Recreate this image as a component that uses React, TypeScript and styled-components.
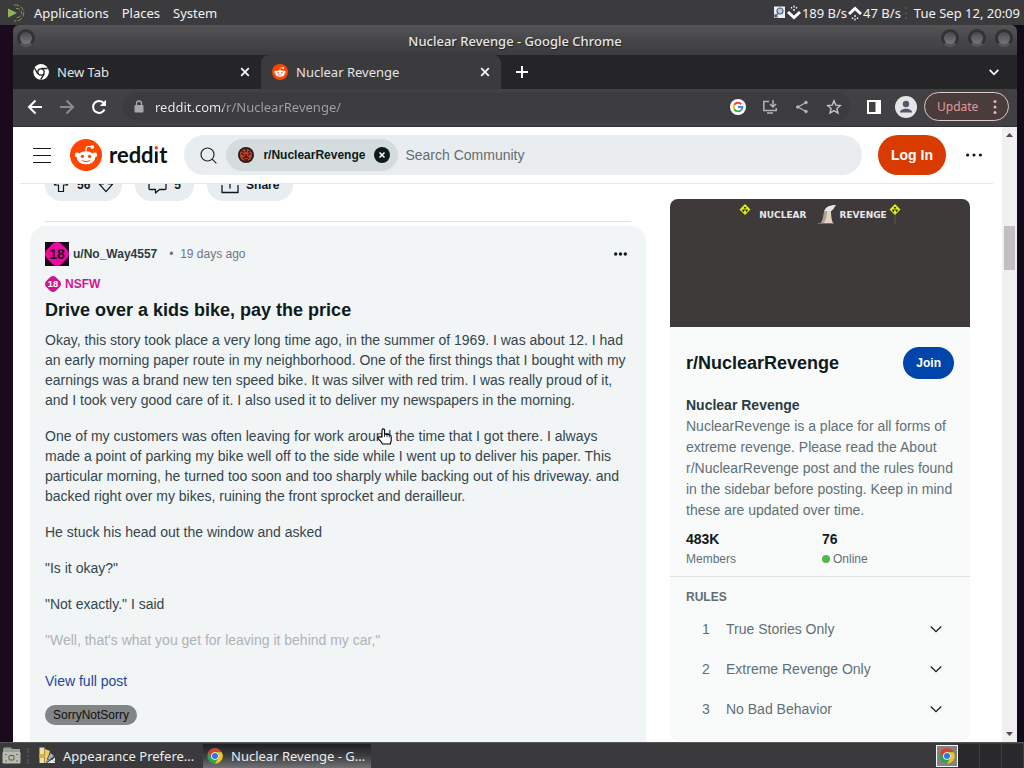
import React from "react";
import styled, { createGlobalStyle } from "styled-components";

const uiFont = '"Noto Sans", sans-serif';
const webFont = '"Liberation Sans", Arial, sans-serif';

const GlobalStyle = createGlobalStyle`
  *, *::before, *::after { box-sizing: border-box; }
  body { margin: 0; background: #1b0b1f; font-family: ${uiFont}; }
  button, input { font: inherit; color: inherit; }
  button { border: 0; padding: 0; background: none; cursor: pointer; }
  input { border: 0; padding: 0; outline: 0; background: none; }
  p, h1, h2, h3, ol, dl, dd { margin: 0; padding: 0; }
  ol { list-style: none; }
  svg { display: block; flex: none; }
`;

/* ---------- desktop ---------- */

const Desktop = styled.div`
  display: flex;
  flex-direction: column;
  height: 100vh;
  overflow: hidden;
  background: linear-gradient(90deg, #1b0a1e, #120c1a);
`;

const Panel = styled.header`
  display: flex;
  align-items: center;
  justify-content: space-between;
  flex: none;
  height: 25px;
  padding: 0 4px 0 8px;
  background: #3b3b3d;
  color: #f2f2f2;
  font-size: 13px;
  line-height: 24px;
`;

const PanelGroup = styled.div<{ $gap?: number }>`
  display: flex;
  align-items: center;
  gap: ${(p) => p.$gap ?? 0}px;
  white-space: nowrap;
`;

const PanelMenu = styled.button`
  margin-left: 8px;
  margin-right: 5px;
  line-height: 24px;
`;

const Clock = styled.time`
  margin-left: 4px;
`;

const Window = styled.section`
  display: flex;
  flex-direction: column;
  flex: 1;
  min-height: 0;
  margin: 0 7px 0 13px;
`;

const TitleBar = styled.div`
  display: grid;
  grid-template-columns: 1fr auto 1fr;
  align-items: center;
  flex: none;
  height: 30px;
  padding: 0 4px;
  border-radius: 6px 6px 0 0;
  background: linear-gradient(#555557, #48484a 45%, #3c3c3e);
`;

const WindowTitle = styled.h1`
  padding-top: 2px;
  color: #e6e6e6;
  font-size: 13px;
  font-weight: 500;
  line-height: 28px;
  text-shadow: 1px 1px 1px #222;
`;

const Orbs = styled.div<{ $end?: boolean }>`
  display: flex;
  gap: 9px;
  padding-bottom: 4px;
  justify-content: ${(p) => (p.$end ? "flex-end" : "flex-start")};
`;

const Orb = styled.button`
  width: 18px;
  height: 18px;
  border: 3px solid #333335;
  border-bottom-color: #565658;
  border-radius: 50%;
  background: linear-gradient(#4a4a4c, #777779);
`;

const TabStrip = styled.div`
  display: flex;
  flex: none;
  height: 34px;
  background: #252527;
  color: #e4e4e6;
  font-size: 13px;
`;

const Tab = styled.div<{ $active?: boolean }>`
  display: flex;
  align-items: center;
  flex: 0 1 ${(p) => (p.$active ? 240 : 248)}px;
  padding: 0 8px 0 ${(p) => (p.$active ? 11 : 20)}px;
  border-radius: 8px 8px 0 0;
  background: ${(p) => (p.$active ? "#3b3b3d" : "transparent")};
`;

const TabLabel = styled.button`
  display: flex;
  align-items: center;
  gap: 8px;
  flex: 1;
  min-width: 0;
  white-space: nowrap;
`;

const SquareButton = styled.button<{ $width?: number }>`
  display: flex;
  align-items: center;
  justify-content: center;
  flex: none;
  align-self: center;
  width: ${(p) => p.$width ?? 32}px;
  height: 28px;
`;

const StripSpacer = styled.div`
  flex: 1;
`;

const Toolbar = styled.div`
  display: flex;
  align-items: center;
  flex: none;
  height: 38px;
  padding: 0 8px 2px 6px;
  border-bottom: 1px solid #303032;
  background: #414143;
`;

const Omnibox = styled.label`
  display: flex;
  align-items: center;
  flex: 1;
  min-width: 0;
  height: 28px;
  margin: 0 8px;
  border-radius: 14px;
  background: #3c3c3e;
`;

const Slot = styled.span`
  display: flex;
  align-items: center;
  justify-content: center;
  flex: none;
  width: 32px;
`;

const UrlInput = styled.input`
  flex: 1;
  min-width: 0;
  height: 28px;
  font-size: 13px;
  color: transparent;
  background: linear-gradient(90deg, #eeeeee 68px, #a2a2a4 68px);
  -webkit-background-clip: text;
  background-clip: text;
`;

const UpdateButton = styled.button`
  display: flex;
  align-items: center;
  justify-content: space-between;
  width: 85px;
  height: 29px;
  margin-left: 2px;
  padding: 0 11px 0 12px;
  border: 1px solid #d9c9c8;
  border-radius: 15px;
  background: #4a3b3c;
  color: #e29a96;
  font-size: 12px;
`;

/* ---------- web page ---------- */

const Viewport = styled.div`
  display: flex;
  flex: 1;
  min-height: 0;
  background: #ffffff;
  font-family: ${webFont};
`;

const Page = styled.div`
  display: flex;
  flex-direction: column;
  flex: 1;
  min-width: 0;
  overflow: hidden;
`;

const SiteHeader = styled.header`
  position: relative;
  z-index: 1;
  display: flex;
  align-items: center;
  flex: none;
  height: 57px;
  margin: 0 9px 0 7px;
  padding-left: 13px;
  border-bottom: 1px solid #e4e7e9;
  background: #ffffff;
`;

const BrandLink = styled.a`
  display: flex;
  align-items: center;
  gap: 7px;
  margin-left: 19px;
  color: #111111;
  font-family: Lato, sans-serif;
  font-size: 22px;
  font-weight: 700;
  line-height: 32px;
  text-decoration: none;
`;

const DottedI = styled.span`
  background: linear-gradient(#ff4500 11px, #111111 11px);
  -webkit-background-clip: text;
  background-clip: text;
  color: transparent;
`;

const SearchBar = styled.div`
  display: flex;
  align-items: center;
  flex: 1;
  min-width: 0;
  height: 40px;
  margin: 0 16px 0 17px;
  padding-left: 16px;
  border-radius: 20px;
  background: #eaedef;
`;

const SearchChip = styled.span`
  display: flex;
  align-items: center;
  gap: 9px;
  height: 32px;
  margin: 0 7px 0 9px;
  padding: 0 8px 0 12px;
  border-radius: 16px;
  background: #d5dcde;
  color: #0f1a1c;
  font-size: 12px;
  font-weight: 700;
  white-space: nowrap;
`;

const SearchInput = styled.input`
  flex: 1;
  min-width: 0;
  height: 40px;
  font-size: 14px;
  color: #5c6c74;
  &::placeholder { color: #5f6d73; opacity: 1; }
`;

const PillButton = styled.button<{ $tone: "login" | "join" }>`
  flex: none;
  height: ${(p) => (p.$tone === "login" ? 40 : 32)}px;
  margin-right: ${(p) => (p.$tone === "login" ? 9 : 0)}px;
  padding: 0 13px;
  border-radius: 20px;
  background: ${(p) => (p.$tone === "login" ? "#d93a00" : "#0045ac")};
  color: #ffffff;
  font-size: ${(p) => (p.$tone === "login" ? 14 : 12)}px;
  font-weight: 700;
`;

const Columns = styled.main`
  display: flex;
  align-items: flex-start;
  gap: 24px;
  flex: 1;
  min-height: 0;
  padding: 0 32px 0 17px;
`;

const Feed = styled.div`
  flex: 1;
  min-width: 0;
  margin-top: -15px;
`;

const ActionRow = styled.div`
  display: flex;
  gap: 13px;
  margin: 0 15px;
  padding-bottom: 20px;
  border-bottom: 1px solid #dde1e3;
`;

const ActionPill = styled.div<{ $pad: number }>`
  display: flex;
  align-items: center;
  gap: 8px;
  height: 32px;
  padding: 0 ${(p) => p.$pad}px;
  border-radius: 16px;
  background: #eaedef;
  color: #0f1a1c;
  font-size: 12px;
  font-weight: 700;
`;

const ActionButton = styled.button`
  display: flex;
  align-items: center;
  gap: 7px;
`;

const Post = styled.article`
  margin-top: 4px;
  padding: 16px 15px 60px;
  border-radius: 16px;
  background: #f2f5f6;
`;

const PostMeta = styled.div`
  display: flex;
  align-items: center;
  height: 24px;
  color: #6b777c;
  font-size: 12px;
`;

const Author = styled.a`
  margin: 0 12px 0 4px;
  color: #2a3c42;
  font-weight: 700;
  text-decoration: none;
`;

const PostMenu = styled.button`
  margin-left: auto;
  padding: 4px;
`;

const Nsfw = styled.div`
  display: flex;
  align-items: center;
  gap: 4px;
  height: 16px;
  margin-top: 10px;
  color: #d6138f;
  font-size: 12px;
  font-weight: 700;
`;

const PostTitle = styled.h2`
  margin: 6px 0 8px;
  color: #0f1a1c;
  font-size: 18px;
  line-height: 24px;
`;

const PostText = styled.div`
  display: flex;
  flex-direction: column;
  gap: 16px;
  color: #33464c;
  font-size: 14px;
  line-height: 20px;
`;

const FadedParagraph = styled.p`
  color: #adb3b6;
`;

const MoreLink = styled.a`
  display: block;
  margin-top: 21px;
  color: #1f459b;
  font-size: 14px;
  line-height: 20px;
  text-decoration: none;
`;

const Flair = styled.a`
  display: inline-block;
  margin-top: 14px;
  padding: 0 8px;
  border-radius: 10px;
  background: #828586;
  color: #101010;
  font-size: 12px;
  line-height: 20px;
  text-decoration: none;
`;

const Sidebar = styled.aside`
  flex: none;
  width: 300px;
  min-height: 540px;
  margin-top: 15px;
  border-radius: 8px;
  background: #f9fbfb;
  color: #5f6f75;
  font-size: 14px;
  overflow: hidden;
`;

const Banner = styled.div`
  display: flex;
  align-items: flex-start;
  justify-content: center;
  height: 128px;
  padding: 4px 0 0;
  background: #3e3a39;
  color: #e8e8e8;
  font-family: "DejaVu Sans", sans-serif;
  font-size: 9px;
  font-weight: 700;
  line-height: 24px;
`;

const BannerWord = styled.span<{ $left: number; $right: number }>`
  margin: 0 ${(p) => p.$right}px 0 ${(p) => p.$left}px;
`;

const About = styled.section`
  padding: 20px 16px 7px;
  border-bottom: 1px solid #dde1e3;
`;

const AboutHead = styled.div`
  display: flex;
  align-items: center;
  justify-content: space-between;
  margin-bottom: 16px;
`;

const CommunityName = styled.h2`
  color: #0f1a1c;
  font-size: 18px;
  line-height: 24px;
`;

const AboutTitle = styled.h3`
  color: #2a3c42;
  font-size: 14px;
  line-height: 21px;
`;

const AboutText = styled.p`
  line-height: 21px;
`;

const Stats = styled.dl`
  display: grid;
  grid-template-columns: 1fr 1fr;
  column-gap: 4px;
  margin-top: 8px;
`;

const Stat = styled.div`
  display: flex;
  flex-direction: column-reverse;
  line-height: 20px;
`;

const StatLabel = styled.dt`
  display: flex;
  align-items: center;
  gap: 3px;
  font-size: 12px;
`;

const StatValue = styled.dd`
  color: #0f1a1c;
  font-weight: 700;
`;

const OnlineDot = styled.span`
  width: 8px;
  height: 8px;
  border-radius: 50%;
  background: #55b649;
`;

const Rules = styled.section`
  padding: 12px 16px;
`;

const RulesTitle = styled.h3`
  margin-bottom: 4px;
  font-size: 12px;
  line-height: 16px;
`;

const RuleButton = styled.button`
  display: grid;
  grid-template-columns: 24px 1fr auto;
  align-items: center;
  width: 100%;
  height: 40px;
  padding: 0 12px 0 16px;
  text-align: left;
`;

const ScrollTrack = styled.div`
  display: flex;
  flex-direction: column;
  align-items: center;
  flex: none;
  width: 15px;
  padding: 6px 0;
  background: #f1f0f1;
`;

const ScrollThumb = styled.div`
  width: 11px;
  height: 44px;
  margin-top: 89px;
  margin-bottom: auto;
  background: #c1bfc1;
`;

/* ---------- bottom panel ---------- */

const TaskBar = styled.footer`
  display: flex;
  align-items: center;
  flex: none;
  height: 26px;
  padding-left: 2px;
  border-top: 1px solid #58585a;
  background: #3a3a3c;
  color: #ececec;
  font-size: 13px;
`;

const Task = styled.button<{ $active?: boolean }>`
  display: flex;
  align-items: center;
  gap: ${(p) => (p.$active ? 8 : 7)}px;
  width: 168px;
  height: 24px;
  padding: 0 4px;
  background: ${(p) => (p.$active ? "linear-gradient(#202022, #3c3c3e 50%, #727274)" : "none")};
`;

const TaskLabel = styled.span`
  flex: 1;
  min-width: 0;
  text-align: left;
  white-space: nowrap;
`;

const Grip = styled.span`
  width: 4px;
  height: 16px;
  margin: 0 4px 0 6px;
  border-left: 2px dotted #505052;
`;

const Tray = styled.button`
  display: flex;
  margin-left: auto;
  padding: 2px;
  border: 1px solid #f5f5f5;
  background: #858280;
`;

const WorkspaceCell = styled.span<{ $width: number }>`
  width: ${(p) => p.$width}px;
  height: 24px;
  border-right: 1px solid #3e3e40;
  background: #29292b;
`;

const Pointer = styled.div`
  position: absolute;
  left: 377px;
  top: 428px;
  z-index: 5;
  pointer-events: none;
`;

/* ---------- drawings ---------- */

const MateLogo = () => (
  <svg width="18" height="18" viewBox="0 0 18 18" fill="none" stroke="#7f9c50">
    <path d="M0 4.500L9 9 0 13.500z" fill="#93b35a" stroke="none" />
    <path d="M6 1.200A8 8 0 1 1 6 16.800" strokeDasharray="5 1.500" />
    <path d="M8 4.500A4.600 4.600 0 1 1 8 13.500" strokeDasharray="4 1.500" />
  </svg>
);

const MonitorIcon = () => (
  <svg width="13" height="13" viewBox="0 0 13 13">
    <rect x="1" y="0.500" width="11" height="11.500" fill="#eceff2" />
    <circle cx="7" cy="5" r="3" fill="#b9cadb" stroke="#4b6784" strokeWidth="1.200" />
    <path d="M2 11L5 7.500M2 8v3h3" stroke="#3c5878" strokeWidth="1.200" fill="none" />
  </svg>
);

const RateArrow = ({ up }: { up?: boolean }) => (
  <svg width="16" height="16" viewBox="0 0 16 16">
    <g transform={up ? "rotate(180 8 8)" : undefined} fill="none" stroke="#fff">
      <path d="M2 7l6 5.500L14 7" strokeWidth="3" />
      <path d="M8 0.500v2M8 4v2M5.500 2v1.500M10.500 2v1.500" strokeWidth="1.300" />
    </g>
  </svg>
);

const ChromeIcon = ({ size, mono }: { size: number; mono?: boolean }) => (
  <svg width={size} height={size} viewBox="0 0 48 48">
    <circle cx="24" cy="24" r="23" fill={mono ? "#fff" : "#31a350"} />
    <path d="M4 12.500A23 23 0 0 1 44 12.500H24A11.500 11.500 0 0 0 14 30Z" fill={mono ? "#fff" : "#e33b2e"} />
    <path d="M44 12.500A23 23 0 0 1 24 47L34 30A11.500 11.500 0 0 0 24 12.500Z" fill={mono ? "#fff" : "#fbc116"} />
    {mono && (
      <path d="M24 13.500H44M14.500 29.500L4.500 12M33.500 29.500L23 47" stroke="#252527" strokeWidth="4" />
    )}
    <circle cx="24" cy="24" r="11.500" fill={mono ? "#252527" : "#fff"} />
    <circle cx="24" cy="24" r={mono ? 7.5 : 9} fill={mono ? "#fff" : "#2f73e0"} />
  </svg>
);

const RedditIcon = ({ size }: { size: number }) => (
  <svg width={size} height={size} viewBox="0 0 32 32">
    <circle cx="16" cy="16" r="16" fill="#ff4500" />
    <circle cx="7.200" cy="16" r="2.400" fill="#fff" />
    <circle cx="24.800" cy="16" r="2.400" fill="#fff" />
    <ellipse cx="16" cy="18.800" rx="9.200" ry="6.500" fill="#fff" />
    <path d="M16 12.500V10q0-2.500 2.500-2.500H21.500" stroke="#fff" strokeWidth="1.100" fill="none" />
    <circle cx="22.300" cy="7.900" r="1.900" fill="#fff" />
    <circle cx="12.400" cy="17.400" r="1.600" fill="#ff4500" />
    <circle cx="19.600" cy="17.400" r="1.600" fill="#ff4500" />
    <path d="M12.500 21.600c2 1.500 5 1.500 7 0" stroke="#ff4500" strokeWidth="1" fill="none" strokeLinecap="round" />
  </svg>
);

const CrossIcon = () => (
  <svg width="10" height="10" viewBox="0 0 10 10" stroke="#fff" strokeWidth="1.700">
    <path d="M1.200 1.200l7.600 7.600M8.800 1.200l-7.600 7.600" />
  </svg>
);

const PlusIcon = () => (
  <svg width="14" height="14" viewBox="0 0 14 14" stroke="#fff" strokeWidth="2">
    <path d="M7 1v12M1 7h12" />
  </svg>
);

const ChevronIcon = ({ size, color, weight }: { size: number; color: string; weight: number }) => (
  <svg width={size} height={size} viewBox="0 0 12 12" fill="none" stroke={color} strokeWidth={weight}>
    <path d="M0.800 3.500L6 8.700L11.200 3.500" />
  </svg>
);

const BackIcon = ({ forward }: { forward?: boolean }) => (
  <svg width="16" height="16" viewBox="0 0 16 16" fill="none" stroke={forward ? "#8c8c8e" : "#fff"} strokeWidth="2">
    <path transform={forward ? "rotate(180 8 8)" : undefined} d="M15 8H2.500M8.500 1.500L2 8l6.500 6.500" />
  </svg>
);

const ReloadIcon = () => (
  <svg width="16" height="16" viewBox="0 0 16 16" fill="none" stroke="#fff" strokeWidth="2">
    <path d="M13.500 10.500A6 6 0 1 1 12.600 4" />
    <path d="M15 0.800V7H8.800Z" fill="#fff" stroke="none" />
  </svg>
);

const LockIcon = () => (
  <svg width="10" height="13" viewBox="0 0 10 13">
    <rect x="0.500" y="5" width="9" height="7.500" rx="1" fill="#a4a8ab" />
    <path d="M2.500 5.500V3.500a2.500 2.500 0 0 1 5 0v2" fill="none" stroke="#a4a8ab" strokeWidth="1.300" />
  </svg>
);

const GoogleIcon = () => (
  <svg width="16" height="16" viewBox="0 0 16 16" fill="none" strokeWidth="1.900">
    <circle cx="8" cy="8" r="8" fill="#fff" />
    <path d="M4.300 5.800A4.400 4.400 0 0 1 11.200 5" stroke="#ea4335" />
    <path d="M4.300 5.700a4.600 4.600 0 0 0 0 4.600" stroke="#fbbc05" />
    <path d="M4.300 10.200A4.400 4.400 0 0 0 11 11.300" stroke="#34a853" />
    <path d="M8 8h4.400a4.400 4.400 0 0 1-1.500 3.400" stroke="#4285f4" />
  </svg>
);

const InstallIcon = () => (
  <svg width="16" height="16" viewBox="0 0 16 16" fill="none" stroke="#b4b4b6" strokeWidth="1.500">
    <path d="M7 2.500H1.800v9h12.400V9M5 14h6M11 1v6.500M8 5l3 3 3-3" />
  </svg>
);

const ShareNodesIcon = () => (
  <svg width="14" height="14" viewBox="0 0 14 14" fill="#b4b4b6" stroke="#b4b4b6">
    <path d="M11 2.500L3 7l8 4.500" fill="none" strokeWidth="1.200" />
    <circle cx="11" cy="2.500" r="1.300" />
    <circle cx="2.800" cy="7" r="1.300" />
    <circle cx="11" cy="11.500" r="1.300" />
  </svg>
);

const StarIcon = () => (
  <svg width="16" height="16" viewBox="0 0 16 16" fill="none" stroke="#c4c4c6" strokeWidth="1.400">
    <path d="M8 1.800l1.800 4.300 4.600.4-3.500 3 1.100 4.500L8 11.600 4 14l1.100-4.500-3.500-3 4.600-.4z" />
  </svg>
);

const SidePanelIcon = () => (
  <svg width="14" height="14" viewBox="0 0 14 14">
    <path fillRule="evenodd" fill="#fff" d="M0 0h14v14H0zM2 2v10h6.500V2z" />
  </svg>
);

const ProfileIcon = () => (
  <svg width="22" height="22" viewBox="0 0 22 22">
    <circle cx="11" cy="11" r="11" fill="#e3e5e9" />
    <circle cx="11" cy="8" r="3.200" fill="#515866" />
    <path d="M5 16.500c0-5 12-5 12 0z" fill="#515866" />
  </svg>
);

const DotsIcon = ({ vertical, color, width, radius }: { vertical?: boolean; color: string; width: number; radius: number }) => {
  const mid = width / 2;
  return (
    <svg width={vertical ? 4 : width} height={vertical ? width : 4} viewBox={vertical ? `0 0 4 ${width}` : `0 0 ${width} 4`} fill={color}>
      {[radius, mid, width - radius].map((at) =>
        vertical ? <circle key={at} cx="2" cy={at} r={radius} /> : <circle key={at} cx={at} cy="2" r={radius} />
      )}
    </svg>
  );
};

const PanelSeparator = () => (
  <svg width="9" height="16" viewBox="0 0 9 16" fill="#5a5a5c">
    <circle cx="5" cy="3" r="1" />
    <circle cx="5" cy="8" r="1" />
    <circle cx="5" cy="13" r="1" />
  </svg>
);

const MenuIcon = () => (
  <svg width="18" height="18" viewBox="0 0 18 18" stroke="#0f1a1c" strokeWidth="1.200">
    <path d="M0 2.500h18M0 9.500h18M0 16.500h18" />
  </svg>
);

const SearchIcon = () => (
  <svg width="17" height="17" viewBox="0 0 17 17" fill="none" stroke="#1e2b30" strokeWidth="1.200">
    <circle cx="7.500" cy="7.500" r="6.500" />
    <path d="M12.200 12.200L16.400 16.400" />
  </svg>
);

const CommunityIcon = () => (
  <svg width="16" height="16" viewBox="0 0 16 16">
    <circle cx="8" cy="8" r="8" fill="#231a18" />
    <circle cx="8" cy="8" r="6.200" fill="#b8442d" />
    <path d="M8 2v3M3 6.500l3 1.500M13 6.500L10 8M5 11.500c2-2 4-2 6 0M8 7v3M4 4l2 1.500M12 4l-2 1.500M6 13h4" stroke="#39150f" strokeWidth="1.300" fill="none" />
  </svg>
);

const ClearIcon = () => (
  <svg width="16" height="16" viewBox="0 0 16 16">
    <circle cx="8" cy="8" r="8" fill="#0f1a1c" />
    <path d="M5.500 5.500l5 5M10.500 5.500l-5 5" stroke="#fff" strokeWidth="1.500" />
  </svg>
);

const VoteIcon = ({ down }: { down?: boolean }) => (
  <svg width="16" height="16" viewBox="0 0 16 16" fill="none" stroke="#0f1a1c" strokeWidth="1.200" strokeLinejoin="round">
    {down ? <path d="M5.500 1.500v5.500H1.300L8 14.600 14.700 7h-4.200V1.500z" /> : <path d="M5.500 14.500V8H1.300L8 1.400 14.700 8h-4.200v6.500z" />}
  </svg>
);

const CommentIcon = () => (
  <svg width="19" height="18" viewBox="0 0 19 18" fill="none" stroke="#0f1a1c" strokeWidth="1.300" strokeLinejoin="round">
    <path d="M2 1.500h15a1 1 0 0 1 1 1v10a1 1 0 0 1-1 1h-5.500L7.500 17v-3.500H2a1 1 0 0 1-1-1v-10a1 1 0 0 1 1-1z" />
  </svg>
);

const ShareIcon = () => (
  <svg width="18" height="18" viewBox="0 0 18 18" fill="none" stroke="#0f1a1c" strokeWidth="1.300">
    <path d="M1 9v7.500h16V9M9 12.500V1.500M4.800 5.500L9 1.500l4.200 4" />
  </svg>
);

const AdultBadge = ({ size, avatar }: { size: number; avatar?: boolean }) => (
  <svg width={size} height={size} viewBox="0 0 24 24">
    {avatar && <rect width="24" height="24" fill="#1a0a18" />}
    <path
      d="M8 1.500q4-3 8 0L22.500 8q3 4 0 8L16 22.500q-4 3-8 0L1.500 16q-3-4 0-8z"
      fill={avatar ? "#ee0a9e" : "#d0168c"}
    />
    <text x="12" y="17" textAnchor="middle" fontFamily="Liberation Sans, sans-serif" fontWeight="700" fontSize="14" fill={avatar ? "#260d22" : "#fff"}>
      18
    </text>
  </svg>
);

const RadiationSign = ({ post }: { post?: boolean }) => (
  <svg width="12" height="22" viewBox="0 0 12 22">
    {post && <path d="M6 11v10" stroke="#5b5755" />}
    <path d="M6 1l5.500 5.500L6 12 .5 6.500z" fill="#dcea16" />
    <path d="M6 6.500L4.800 4h2.400zM6 6.500l-3.200.3 1.600 2.400zM6 6.500l3.200.3-1.600 2.400z" fill="#26251c" />
  </svg>
);

const CoolingTower = () => (
  <svg width="20" height="22" viewBox="0 0 20 22">
    <path d="M7 9C8 3 14 2 19 2c-2 3-3 5-6 7z" fill="#e5e7ea" />
    <path d="M7 8h7c0 5 .5 9 2 12H4c2-3 3-7 3-12z" fill="#e2d2c4" />
    <path d="M7 8h3c0 5-1 9-3 12H4c2-3 3-7 3-12z" fill="#b39f90" />
    <path d="M1 20.500h16" stroke="#8a6a52" />
  </svg>
);

const ScrollArrow = ({ down }: { down?: boolean }) => (
  <svg width="7" height="4" viewBox="0 0 7 4" fill="#4c4a4c">
    {down ? <path d="M0 0h7L3.500 4z" /> : <path d="M0 4h7L3.500 0z" />}
  </svg>
);

const DrawerIcon = () => (
  <svg width="19" height="17" viewBox="0 0 19 17">
    <path d="M1 2.500L2 .5h7l1 1.500h8v14H1z" fill="#9c9f93" />
    <rect x="0.500" y="5" width="18" height="11.500" rx="1" fill="#b9bbae" />
    <rect x="7" y="8.500" width="5" height="4.500" rx="1" fill="none" stroke="#54564e" />
    <path d="M3 7.500h2M3 14h2M14 7.500h2M14 14h2" stroke="#6c6e66" />
  </svg>
);

const AppearanceIcon = () => (
  <svg width="17" height="17" viewBox="0 0 17 17">
    <rect x="0.500" y="0.500" width="5" height="15.500" fill="#eedfa2" />
    <rect x="0.500" y="7" width="5" height="4" fill="#d9b13d" />
    <path d="M6 2l5 2-4 12H6z" fill="#f3c956" />
    <path d="M11.500 6l3.500 3-8 7z" fill="#9db1cc" />
    <path d="M16 10.500v5.500H8z" fill="#e8e8ea" />
    <path d="M12 11l4 4M8 11l2 2" stroke="#333" strokeDasharray="1 1" />
  </svg>
);

const HandPointer = () => (
  <svg width="15" height="17" viewBox="0 0 15 17">
    <path
      d="M5 9V2.200a1.300 1.300 0 0 1 2.600 0V6l5 .8q1.600.4 1.600 2V13l-1 3H5.500L4 13.500 1 10.500q-.6-1.500 1.300-1.600z"
      fill="#fff"
      stroke="#000"
      strokeWidth="1.100"
    />
    <path d="M7.500 6v3M10 6.500V9M12.300 7v2.500" stroke="#000" strokeWidth="0.800" />
  </svg>
);

const rules = ["True Stories Only", "Extreme Revenge Only", "No Bad Behavior"];

export default function App() {
  return (
    <Desktop>
      <GlobalStyle />
      <Panel>
        <PanelGroup>
          <MateLogo />
          <PanelMenu>Applications</PanelMenu>
          <PanelMenu>Places</PanelMenu>
          <PanelMenu>System</PanelMenu>
        </PanelGroup>
        <PanelGroup>
          <MonitorIcon />
          <RateArrow />
          <span>189 B/s</span>
          <RateArrow up />
          <span>47 B/s</span>
          <PanelSeparator />
          <Clock>Tue Sep 12, 20:09</Clock>
        </PanelGroup>
      </Panel>

      <Window>
        <TitleBar>
          <Orbs>
            <Orb aria-label="Window menu" />
          </Orbs>
          <WindowTitle>Nuclear Revenge - Google Chrome</WindowTitle>
          <Orbs $end>
            <Orb aria-label="Minimize" />
            <Orb aria-label="Maximize" />
            <Orb aria-label="Close" />
          </Orbs>
        </TitleBar>

        <TabStrip>
          <Tab>
            <TabLabel>
              <ChromeIcon size={16} mono />
              New Tab
            </TabLabel>
            <SquareButton $width={16} aria-label="Close New Tab">
              <CrossIcon />
            </SquareButton>
          </Tab>
          <Tab $active>
            <TabLabel>
              <RedditIcon size={16} />
              Nuclear Revenge
            </TabLabel>
            <SquareButton $width={16} aria-label="Close Nuclear Revenge">
              <CrossIcon />
            </SquareButton>
          </Tab>
          <SquareButton $width={42} aria-label="New tab">
            <PlusIcon />
          </SquareButton>
          <StripSpacer />
          <SquareButton $width={46} aria-label="Search tabs">
            <ChevronIcon size={10} color="#fff" weight={2} />
          </SquareButton>
        </TabStrip>

        <Toolbar>
          <SquareButton aria-label="Back">
            <BackIcon />
          </SquareButton>
          <SquareButton aria-label="Forward">
            <BackIcon forward />
          </SquareButton>
          <SquareButton aria-label="Reload">
            <ReloadIcon />
          </SquareButton>
          <Omnibox>
            <Slot>
              <LockIcon />
            </Slot>
            <UrlInput aria-label="Address" defaultValue="reddit.com/r/NuclearRevenge/" />
            <SquareButton aria-label="Search this page with Google">
              <GoogleIcon />
            </SquareButton>
            <SquareButton aria-label="Install">
              <InstallIcon />
            </SquareButton>
            <SquareButton aria-label="Share this page">
              <ShareNodesIcon />
            </SquareButton>
            <SquareButton aria-label="Bookmark">
              <StarIcon />
            </SquareButton>
          </Omnibox>
          <SquareButton aria-label="Side panel">
            <SidePanelIcon />
          </SquareButton>
          <SquareButton aria-label="Profile">
            <ProfileIcon />
          </SquareButton>
          <UpdateButton>
            Update
            <DotsIcon vertical width={14} radius={1.5} color="#e5b3b0" />
          </UpdateButton>
        </Toolbar>

        <Viewport>
          <Page>
            <SiteHeader>
              <SquareButton $width={18} aria-label="Menu">
                <MenuIcon />
              </SquareButton>
              <BrandLink href="#home">
                <RedditIcon size={32} />
                <span>
                  redd<DottedI>i</DottedI>t
                </span>
              </BrandLink>
              <SearchBar>
                <SearchIcon />
                <SearchChip>
                  <CommunityIcon />
                  r/NuclearRevenge
                  <button aria-label="Clear community filter">
                    <ClearIcon />
                  </button>
                </SearchChip>
                <SearchInput aria-label="Search Community" placeholder="Search Community" />
              </SearchBar>
              <PillButton $tone="login">Log In</PillButton>
              <SquareButton $width={38} aria-label="More options">
                <DotsIcon width={16} radius={1.6} color="#0f1a1c" />
              </SquareButton>
            </SiteHeader>

            <Columns>
              <Feed>
                <ActionRow>
                  <ActionPill $pad={8}>
                    <ActionButton aria-label="Upvote">
                      <VoteIcon />
                    </ActionButton>
                    <span>56</span>
                    <ActionButton aria-label="Downvote">
                      <VoteIcon down />
                    </ActionButton>
                  </ActionPill>
                  <ActionPill $pad={13}>
                    <ActionButton>
                      <CommentIcon />5
                    </ActionButton>
                  </ActionPill>
                  <ActionPill $pad={14}>
                    <ActionButton>
                      <ShareIcon />
                      Share
                    </ActionButton>
                  </ActionPill>
                </ActionRow>

                <Post>
                  <PostMeta>
                    <AdultBadge size={24} avatar />
                    <Author href="#author">u/No_Way4557</Author>
                    <span>•&nbsp; 19 days ago</span>
                    <PostMenu aria-label="Post options">
                      <DotsIcon width={13} radius={1.7} color="#0f1a1c" />
                    </PostMenu>
                  </PostMeta>
                  <Nsfw>
                    <AdultBadge size={16} />
                    NSFW
                  </Nsfw>
                  <PostTitle>Drive over a kids bike, pay the price</PostTitle>
                  <PostText>
                    <p>
                      Okay, this story took place a very long time ago, in the summer of 1969. I was about 12. I had an
                      early morning paper route in my neighborhood. One of the first things that I bought with my
                      earnings was a brand new ten speed bike. It was silver with red trim. I was really proud of it,
                      and I took very good care of it. I also used it to deliver my newspapers in the morning.
                    </p>
                    <p>
                      One of my customers was often leaving for work around the time that I got there. I always made a
                      point of parking my bike well off to the side while I went up to deliver his paper. This
                      particular morning, he turned too soon and too sharply while backing out of his driveway. and
                      backed right over my bikes, ruining the front sprocket and derailleur.
                    </p>
                    <p>He stuck his head out the window and asked</p>
                    <p>"Is it okay?"</p>
                    <p>"Not exactly." I said</p>
                    <FadedParagraph>"Well, that's what you get for leaving it behind my car,"</FadedParagraph>
                  </PostText>
                  <MoreLink href="#post">View full post</MoreLink>
                  <Flair href="#flair">SorryNotSorry</Flair>
                </Post>
              </Feed>

              <Sidebar>
                <Banner>
                  <RadiationSign />
                  <BannerWord $left={8} $right={11}>NUCLEAR</BannerWord>
                  <CoolingTower />
                  <BannerWord $left={2} $right={2}>REVENGE</BannerWord>
                  <RadiationSign post />
                </Banner>
                <About>
                  <AboutHead>
                    <CommunityName>r/NuclearRevenge</CommunityName>
                    <PillButton $tone="join">Join</PillButton>
                  </AboutHead>
                  <AboutTitle>Nuclear Revenge</AboutTitle>
                  <AboutText>
                    NuclearRevenge is a place for all forms of extreme revenge. Please read the About r/NuclearRevenge
                    post and the rules found in the sidebar before posting. Keep in mind these are updated over time.
                  </AboutText>
                  <Stats>
                    <Stat>
                      <StatLabel>Members</StatLabel>
                      <StatValue>483K</StatValue>
                    </Stat>
                    <Stat>
                      <StatLabel>
                        <OnlineDot />
                        Online
                      </StatLabel>
                      <StatValue>76</StatValue>
                    </Stat>
                  </Stats>
                </About>
                <Rules>
                  <RulesTitle>RULES</RulesTitle>
                  <ol>
                    {rules.map((rule, index) => (
                      <li key={rule}>
                        <RuleButton>
                          <span>{index + 1}</span>
                          <span>{rule}</span>
                          <ChevronIcon size={12} color="#0f1a1c" weight={1.3} />
                        </RuleButton>
                      </li>
                    ))}
                  </ol>
                </Rules>
              </Sidebar>
            </Columns>
          </Page>
          <ScrollTrack>
            <ScrollArrow />
            <ScrollThumb />
            <ScrollArrow down />
          </ScrollTrack>
        </Viewport>
      </Window>

      <TaskBar>
        <DrawerIcon />
        <Grip />
        <Task>
          <AppearanceIcon />
          <TaskLabel>Appearance Prefere...</TaskLabel>
        </Task>
        <Task $active>
          <ChromeIcon size={16} />
          <TaskLabel>Nuclear Revenge - G...</TaskLabel>
        </Task>
        <Tray aria-label="Chrome notifications">
          <ChromeIcon size={16} />
        </Tray>
        <WorkspaceCell $width={22} />
        <WorkspaceCell $width={22} />
        <WorkspaceCell $width={22} />
      </TaskBar>
      <Pointer>
        <HandPointer />
      </Pointer>
    </Desktop>
  );
}
